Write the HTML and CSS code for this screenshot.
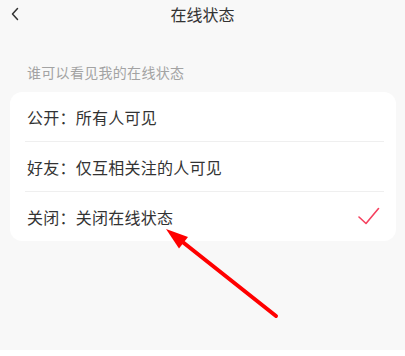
FILE: index.html
```html
<!DOCTYPE html>
<html lang="zh">
<head>
<meta charset="utf-8">
<link rel="stylesheet" href="styles.css">
</head>
<body>
<div class="page">
  <header class="header">
    <svg class="back" width="10" height="14" viewBox="0 0 10 14"><path d="M7.5 1.5 L2.5 7 L7.5 12.5" fill="none" stroke="#333" stroke-width="1.5" stroke-linecap="round" stroke-linejoin="round"/></svg>
    <h1 class="title">在线状态</h1>
  </header>
  <div class="label">谁可以看见我的在线状态</div>
  <div class="card">
    <div class="row"><span>公开：所有人可见</span></div>
    <div class="divider"></div>
    <div class="row"><span>好友：仅互相关注的人可见</span></div>
    <div class="divider"></div>
    <div class="row"><span>关闭：关闭在线状态</span>
      <svg class="check" width="22" height="18" viewBox="0 0 22 18"><path d="M1 10 L8 16.5 L20.5 1.5" fill="none" stroke="#f5405e" stroke-width="1.6" stroke-linecap="round" stroke-linejoin="round"/></svg>
    </div>
  </div>
  <div class="spacer"></div>
  <div class="bottom"></div>
  <svg class="arrow" width="405" height="356" viewBox="0 0 405 356">
    <line x1="276" y1="316" x2="182" y2="241.5" stroke="#ff0000" stroke-width="4" stroke-linecap="round"/>
    <polygon points="166,229 188,237 179,248.5" fill="#ff0000"/>
  </svg>
</div>
</body>
</html>
```
FILE: styles.css
```css
html, body {
  margin: 0;
  padding: 0;
  background: #ffffff;
}
.page {
  position: relative;
  width: 405px;
  height: 356px;
  background: #f8f8f8;
  font-family: "Noto Sans CJK SC", "Noto Sans", sans-serif;
  display: flex;
  flex-direction: column;
  overflow: hidden;
}
.header {
  position: relative;
  height: 28px;
  display: flex;
  align-items: center;
  justify-content: center;
}
.back {
  position: absolute;
  left: 10px;
  top: 7px;
}
.title {
  margin: 0;
  font-size: 16px;
  font-weight: 400;
  color: #333;
  line-height: 28px;
}
.label {
  margin-top: 34px;
  padding-left: 27px;
  font-size: 14px;
  letter-spacing: 0.3px;
  line-height: 20px;
  color: #a3a3a3;
}
.card {
  margin: 10px 9px 0 10px;
  background: #fff;
  border-radius: 12px;
  display: flex;
  flex-direction: column;
}
.row {
  height: 49px;
  display: flex;
  align-items: center;
  justify-content: space-between;
  padding: 0 16px 0 17px;
  font-size: 16px;
  letter-spacing: 0.25px;
  color: #333;
}
.divider {
  height: 1px;
  background: #efefef;
  margin: 0 12px 0 15px;
}
.check {
  margin-top: -1px;
}
.spacer {
  flex: 1;
}
.bottom {
  height: 6px;
  background: #fff;
}
.arrow {
  position: absolute;
  left: 0;
  top: 0;
  pointer-events: none;
}
```
